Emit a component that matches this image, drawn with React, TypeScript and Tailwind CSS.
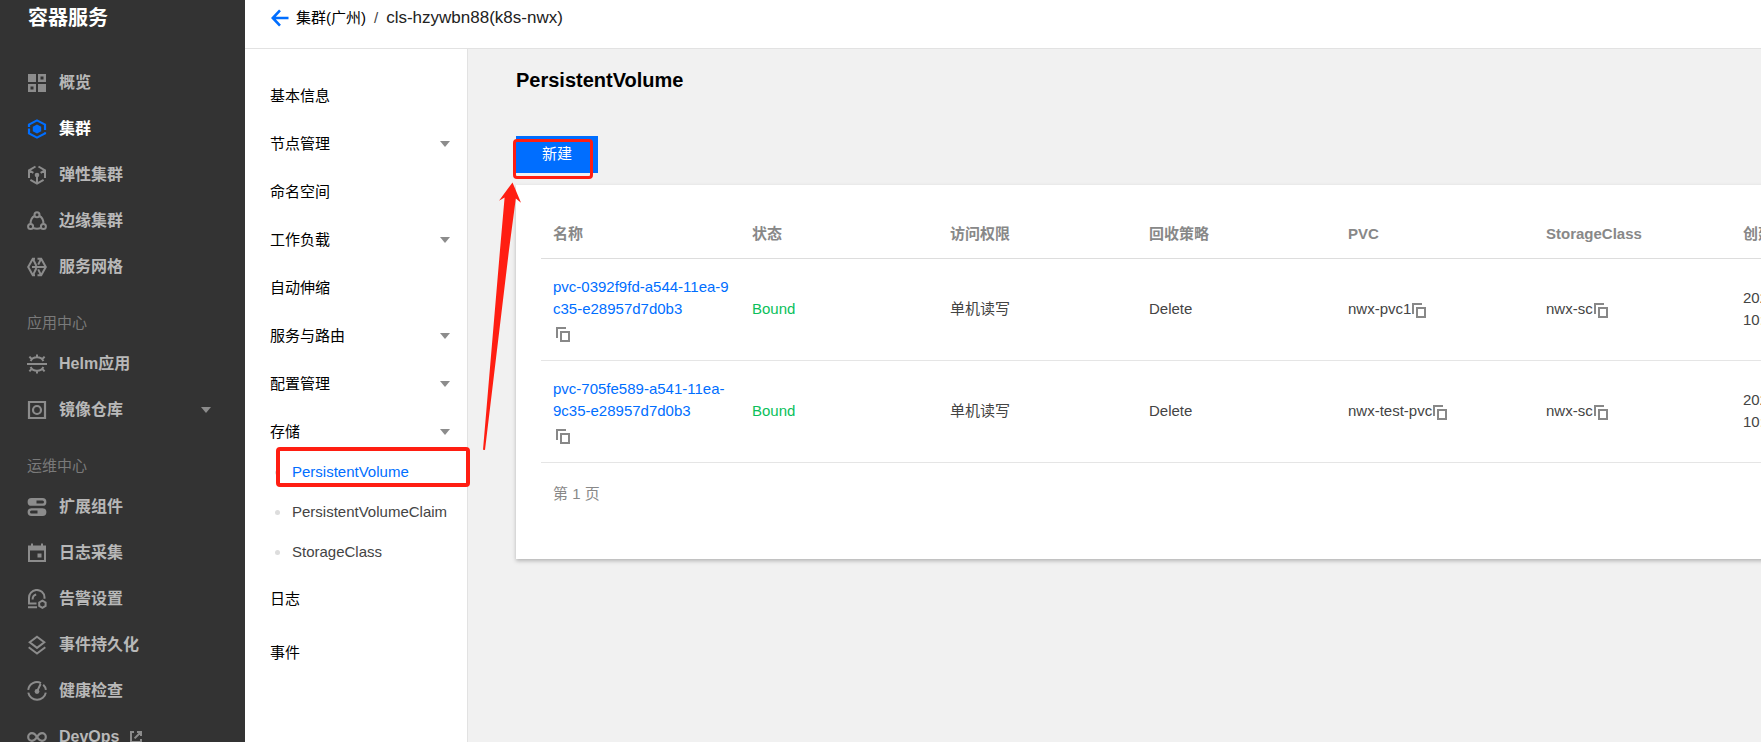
import type { ReactNode } from "react";

const GridIcon = () => (
  <svg viewBox="0 0 20 20" className="size-5" fill="currentColor" aria-hidden="true">
    <path d="M1 1h8v8H1zM11 11h8v8h-8z" />
    <path fillRule="evenodd" d="M11 1h8v8h-8zM13.5 3.5v3h3v-3zM1 11h8v8H1zM3.5 13.500v3h3v-3z" />
  </svg>
);

const ClusterIcon = () => (
  <svg viewBox="0 0 20 20" className="size-5" fill="none" stroke="currentColor" strokeWidth="2.200" aria-hidden="true">
    <path d="M2 8V5.600L10 1.400l8 4.200V11" />
    <path d="M18 13.200v1.200l-8 4.200-8-4.200V9.500" />
    <path d="M10 5.400l4.200 2.300v4.600L10 14.600l-4.200-2.300V7.700z" fill="currentColor" stroke="none" />
  </svg>
);

const ElasticIcon = () => (
  <svg viewBox="0 0 20 20" className="size-5" fill="none" stroke="currentColor" strokeWidth="2" aria-hidden="true">
    <path d="M8.500 1.500L2 5.300V13M11.500 1.500L18 5.300V13M2.400 5.600l4 2.300M17.600 5.600l-4 2.300M10 18.400V11M3.400 14.800l6.600 3.800 6.600-3.800" />
    <circle cx="10" cy="10" r="2.300" fill="currentColor" stroke="none" />
  </svg>
);

const EdgeIcon = () => (
  <svg viewBox="0 0 20 20" className="size-5" fill="none" stroke="currentColor" strokeWidth="2" aria-hidden="true">
    <circle cx="10" cy="3.800" r="2.500" />
    <circle cx="3.600" cy="15.600" r="2.500" />
    <circle cx="16.400" cy="15.600" r="2.500" />
    <path d="M7.600 5C4.900 6.200 3.600 9 3.600 12.600M12.400 5c2.700 1.200 4 4 4 7.600M6.200 17c2.400.9 5.200.9 7.600 0" />
  </svg>
);

const MeshIcon = () => (
  <svg viewBox="0 0 20 20" className="size-5" fill="none" stroke="currentColor" strokeWidth="2" aria-hidden="true">
    <path d="M8 1.800H5.800L1.200 10l4.600 8.200H8M6.200 2.400L9.400 9M6.200 17.600L9.400 11M5 10h13.500M10.500 1.800h3.700L18.800 10l-4.600 8.200h-3.700M13.800 2.400l-2.600 5.200M13.800 17.600l-2.600-5.200" />
  </svg>
);

const HelmIcon = () => (
  <svg viewBox="0 0 20 20" className="size-5" fill="none" stroke="currentColor" strokeWidth="2" aria-hidden="true">
    <path d="M0 10h20M3.600 7c1.200-2.500 3.600-3.800 6.400-3.800S15.200 4.500 16.400 7M3.600 13c1.200 2.500 3.600 3.800 6.400 3.800s5.200-1.300 6.400-3.800M10 3.200V.6M10 16.800v2.600M4.600 5L2.400 2.600M15.400 5l2.200-2.400M4.600 15l-2.200 2.400M15.400 15l2.200 2.400" />
  </svg>
);

const ImageRepoIcon = () => (
  <svg viewBox="0 0 20 20" className="size-5" fill="none" stroke="currentColor" strokeWidth="2.200" aria-hidden="true">
    <path d="M2 2h16v16H2z" />
    <circle cx="10" cy="10" r="4" />
  </svg>
);

const AddonIcon = () => (
  <svg viewBox="0 0 20 20" className="size-5" fill="currentColor" aria-hidden="true">
    <path
      fillRule="evenodd"
      d="M4.500 1h11a3.700 3.700 0 0 1 0 7.800h-11a3.700 3.700 0 0 1 0-7.800zM9.500 3.400v3h6a1.500 1.500 0 0 0 0-3zM4.500 11.200h11a3.700 3.700 0 0 1 0 7.800h-11a3.700 3.700 0 0 1 0-7.800zM4.500 13.600a1.500 1.500 0 0 0 0 3h6v-3z"
    />
  </svg>
);

const LogIcon = () => (
  <svg viewBox="0 0 20 20" className="size-5" fill="currentColor" aria-hidden="true">
    <path fillRule="evenodd" d="M1 2.500h3V.5h2v2h8v-2h2v2h3V19H1zM3 7.500V17h14V7.500z" />
    <path d="M10.500 10.500h4v4h-4z" />
  </svg>
);

const AlarmIcon = () => (
  <svg viewBox="0 0 20 20" className="size-5" fill="none" stroke="currentColor" strokeWidth="2" aria-hidden="true">
    <path d="M9.500 14.500H2V9.200a7.500 7.500 0 0 1 15.500-1v1.600M1 18.300h9M5.600 10.500c0-2.600 1.200-4.400 3.600-4.900" />
    <path d="M15.400 11.600l3.200 1.900v3.400l-3.200 1.900-3.200-1.900v-3.400z" />
  </svg>
);

const LayersIcon = () => (
  <svg viewBox="0 0 20 20" className="size-5" fill="none" stroke="currentColor" strokeWidth="2" aria-hidden="true">
    <path d="M10 1.700l7.300 5.600L10 12.900 2.700 7.300zM1.700 12.200l8.300 6.300 8.300-6.300" />
  </svg>
);

const HealthIcon = () => (
  <svg viewBox="0 0 20 20" className="size-5" fill="none" stroke="currentColor" strokeWidth="2" aria-hidden="true">
    <path d="M1.200 8.800A8.900 8.900 0 0 1 14 2.100M16.200 3.700a8.900 8.900 0 0 1 2.700 5.100M18.800 11.600a8.900 8.900 0 0 1-17.500 0M10.400 9.600L13.600 3" />
    <circle cx="10" cy="10.500" r="2.400" fill="currentColor" stroke="none" />
  </svg>
);

const InfinityIcon = () => (
  <svg viewBox="0 0 20 20" className="size-5" fill="none" stroke="currentColor" strokeWidth="2.200" aria-hidden="true">
    <path d="M10 10C8.300 7.300 7 6.200 5 6.200a3.800 3.800 0 0 0 0 7.600c2 0 3.300-1.100 5-3.800s3-3.800 5-3.800a3.800 3.800 0 0 1 0 7.600c-2 0-3.300-1.100-5-3.800z" />
  </svg>
);

const ExternalIcon = () => (
  <svg viewBox="0 0 14 14" className="size-3.5 text-[#8c8c8c]" fill="none" stroke="currentColor" strokeWidth="2" aria-hidden="true">
    <path d="M5 2H2v10h10V9M8 2h4v4M12 2L5.600 8.400" />
  </svg>
);

const Caret = () => (
  <svg viewBox="0 0 10 6" className="h-1.5 w-2.5 text-[#8c8c8c]" fill="currentColor" aria-hidden="true">
    <path d="M0 0h10L5 6z" />
  </svg>
);

const CopyButton = ({ label }: { label: string }) => (
  <button type="button" aria-label={label} className="inline-block align-middle text-[#888888]">
    <svg viewBox="0 0 16 16" className="size-4" fill="none" stroke="currentColor" strokeWidth="2" aria-hidden="true">
      <path d="M2 12V2h9" />
      <path d="M6 6h8v9H6z" />
    </svg>
  </button>
);

type NavEntry = { label: string; icon: ReactNode; active?: boolean; caret?: boolean; external?: boolean };

const groups: { title?: string; items: NavEntry[] }[] = [
  {
    items: [
      { label: "概览", icon: <GridIcon /> },
      { label: "集群", icon: <ClusterIcon />, active: true },
      { label: "弹性集群", icon: <ElasticIcon /> },
      { label: "边缘集群", icon: <EdgeIcon /> },
      { label: "服务网格", icon: <MeshIcon /> },
    ],
  },
  {
    title: "应用中心",
    items: [
      { label: "Helm应用", icon: <HelmIcon /> },
      { label: "镜像仓库", icon: <ImageRepoIcon />, caret: true },
    ],
  },
  {
    title: "运维中心",
    items: [
      { label: "扩展组件", icon: <AddonIcon /> },
      { label: "日志采集", icon: <LogIcon /> },
      { label: "告警设置", icon: <AlarmIcon /> },
      { label: "事件持久化", icon: <LayersIcon /> },
      { label: "健康检查", icon: <HealthIcon /> },
      { label: "DevOps", icon: <InfinityIcon />, external: true },
    ],
  },
];

const clusterMenu = [
  { label: "基本信息", caret: false },
  { label: "节点管理", caret: true },
  { label: "命名空间", caret: false },
  { label: "工作负载", caret: true },
  { label: "自动伸缩", caret: false },
  { label: "服务与路由", caret: true },
  { label: "配置管理", caret: true },
  { label: "存储", caret: true },
];

const storageMenu = ["PersistentVolume", "PersistentVolumeClaim", "StorageClass"];

const volumes = [
  { name: "pvc-0392f9fd-a544-11ea-9c35-e28957d7d0b3", pvc: "nwx-pvc1", sc: "nwx-sc" },
  { name: "pvc-705fe589-a541-11ea-9c35-e28957d7d0b3", pvc: "nwx-test-pvc", sc: "nwx-sc" },
];

function Sidebar() {
  return (
    <aside className="w-[245px] shrink-0 overflow-hidden bg-[#333333]">
      <h1 className="mb-6 flex h-9 items-center pl-7 text-xl font-bold text-white">容器服务</h1>
      <nav aria-label="容器服务">
        {groups.map((group, i) => (
          <div key={i}>
            {group.title && (
              <h2 className="flex h-[51px] items-center pt-4 pl-[27px] text-[15px] text-[#7a7a7a]">{group.title}</h2>
            )}
            <ul>
              {group.items.map((item) => (
                <li key={item.label}>
                  <a href="#" className="flex h-[46px] items-center pr-[34px] pl-[27px]">
                    <span className={item.active ? "text-[#006eff]" : "text-[#8c8c8c]"}>{item.icon}</span>
                    <span
                      className={
                        item.active
                          ? "ml-3 text-base font-bold text-white"
                          : "ml-3 text-base font-bold text-[#b8b8b8]"
                      }
                    >
                      {item.label}
                    </span>
                    {item.external && <span className="ml-2.5"><ExternalIcon /></span>}
                    {item.caret && <span className="ml-auto"><Caret /></span>}
                  </a>
                </li>
              ))}
            </ul>
          </div>
        ))}
      </nav>
    </aside>
  );
}

function ClusterNav() {
  return (
    <nav aria-label="集群" className="w-[223px] shrink-0 border-r border-[#e2e2e2] bg-white pt-[23px] text-[15px] text-black">
      <ul>
        {clusterMenu.map((item) => (
          <li key={item.label}>
            <a href="#" className="flex h-12 items-center justify-between pr-[17px] pl-[25px]">
              {item.label}
              {item.caret && <Caret />}
            </a>
          </li>
        ))}
        <li>
          <ul className="-mt-1">
            {storageMenu.map((label, i) => (
              <li key={label} className="relative">
                <a
                  href="#"
                  className={
                    i === 0
                      ? "flex h-10 items-center gap-3 pl-[30px] text-[#006eff]"
                      : "flex h-10 items-center gap-3 pl-[30px] text-[#444444]"
                  }
                >
                  <span className="size-[5px] rounded-full bg-[#dddddd]" />
                  {label}
                </a>
                {i === 0 && (
                  <div className="pointer-events-none absolute -top-[5px] left-[31px] z-10 h-10 w-[194px] rounded border-4 border-[#ff1e12]" />
                )}
              </li>
            ))}
          </ul>
        </li>
        <li>
          <a href="#" className="flex h-[54px] items-center pl-[25px]">日志</a>
        </li>
        <li>
          <a href="#" className="flex h-[54px] items-center pl-[25px]">事件</a>
        </li>
      </ul>
    </nav>
  );
}

function VolumeTable() {
  return (
    <table className="w-full table-fixed border-collapse text-left text-[15px] leading-[22px] text-[#444444]">
      <colgroup>
        <col className="w-[199px]" />
        <col className="w-[198px]" />
        <col className="w-[199px]" />
        <col className="w-[199px]" />
        <col className="w-[198px]" />
        <col className="w-[197px]" />
        <col />
      </colgroup>
      <thead>
        <tr className="h-12 border-b border-[#dddddd] text-[#888888]">
          {["名称", "状态", "访问权限", "回收策略", "PVC", "StorageClass", "创建时间"].map((h) => (
            <th key={h} scope="col" className="pr-2.5 pl-3 font-bold">{h}</th>
          ))}
        </tr>
      </thead>
      <tbody>
        {volumes.map((v) => (
          <tr key={v.name} className="h-[102px] border-b border-[#e5e5e5]">
            <td className="pr-2.5 pl-3">
              <a href="#" className="block break-all text-[#006eff]">{v.name}</a>
              <div className="flex h-[22px] items-end pl-0.5">
                <CopyButton label={"复制 " + v.name} />
              </div>
            </td>
            <td className="pr-2.5 pl-3 text-[#0abf5b]">Bound</td>
            <td className="pr-2.5 pl-3">单机读写</td>
            <td className="pr-2.5 pl-3">Delete</td>
            <td className="pr-2.5 pl-3">
              {v.pvc}
              <CopyButton label={"复制 " + v.pvc} />
            </td>
            <td className="pr-2.5 pl-3">
              {v.sc}
              <CopyButton label={"复制 " + v.sc} />
            </td>
            <td className="pr-2.5 pl-3">
              2020-06-03
              <br />
              10:00:00
            </td>
          </tr>
        ))}
      </tbody>
    </table>
  );
}

export default function App() {
  return (
    <div className="flex h-screen overflow-hidden bg-[#f1f1f1] font-['Liberation_Sans','Noto_Sans_CJK_SC',sans-serif]">
      <Sidebar />
      <div className="flex min-w-0 flex-1 flex-col">
        <header className="flex h-[49px] shrink-0 items-center border-b border-[#e2e2e2] bg-white pb-3 pl-[25px] text-black">
          <a href="#" aria-label="返回" className="mr-1.5 text-[#006eff]">
            <svg viewBox="0 0 20 18" className="h-[18px] w-5" fill="none" stroke="currentColor" strokeWidth="2.600" aria-hidden="true">
              <path d="M10 1.400L2.800 9l7.200 7.600M2.800 9H18.500" />
            </svg>
          </a>
          <a href="#" className="text-[15px]">集群(广州)</a>
          <span className="mx-2 text-[15px] text-[#444444]">/</span>
          <span className="text-[17px] text-[#222222]">cls-hzywbn88(k8s-nwx)</span>
        </header>
        <div className="flex min-h-0 flex-1">
          <ClusterNav />
          <main className="min-w-0 flex-1 overflow-hidden pt-[17px] pl-12">
            <h2 className="text-xl leading-7 font-bold text-black">PersistentVolume</h2>
            <div className="relative mt-[42px] w-fit">
              <button type="button" className="block h-[37px] w-[82px] bg-[#006eff] text-[15px] text-white">新建</button>
              <div className="pointer-events-none absolute top-[3px] -left-[3px] z-10 h-10 w-20 rounded border-[3px] border-[#ff1e12]" />
              <svg
                viewBox="0 0 40 270"
                className="pointer-events-none absolute top-[46px] -left-[34px] z-10 h-[270px] w-10"
                fill="#ff1e12"
                aria-hidden="true"
              >
                <path d="M30.500 .5L17 18.700l5.600-3.200L18 68 1 267.800l2 .2L27 68l6.800-51.500 5.200 4.200z" />
              </svg>
            </div>
            <section className="mt-3 min-w-[1500px] bg-white px-[25px] pt-[25px] shadow-[0_2px_4px_rgba(0,0,0,0.25)]">
              <VolumeTable />
              <p className="h-24 pt-5 pl-3 text-[15px] leading-[22px] text-[#888888]">第 1 页</p>
            </section>
          </main>
        </div>
      </div>
    </div>
  );
}
